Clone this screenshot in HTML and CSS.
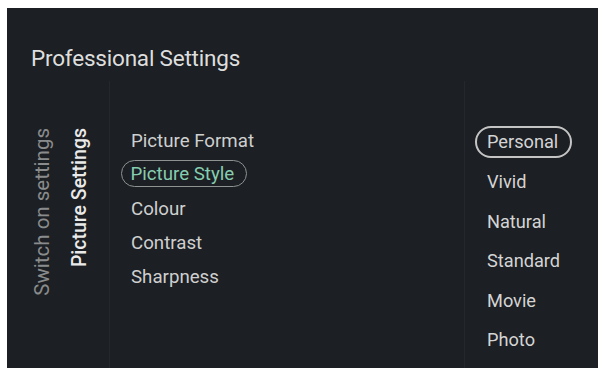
FILE: index.html
```html
<!DOCTYPE html>
<html lang="en">

<head>
    <meta charset="UTF-8">
    <meta name="viewport" content="width=device-width, initial-scale=1.0">
    <title>Professional Settings</title>
    <link rel="stylesheet" href="styles.css">
</head>

<body>
    <div class="panel">
        <h1 class="title">Professional Settings</h1>

        <div class="menu">
            <!-- Breadcrumb, rotated -->
            <div class="crumbs">
                <span class="crumb">Switch on settings</span>
                <span class="crumb current">Picture Settings</span>
            </div>

            <!-- Picture settings list -->
            <ul class="list middle">
                <li>Picture Format</li>
                <li class="focus">Picture Style</li>
                <li>Colour</li>
                <li>Contrast</li>
                <li>Sharpness</li>
            </ul>

            <!-- Picture style options -->
            <ul class="list options">
                <li class="selected">Personal</li>
                <li>Vivid</li>
                <li>Natural</li>
                <li>Standard</li>
                <li>Movie</li>
                <li>Photo</li>
            </ul>
        </div>
    </div>
</body>

</html>
```

FILE: styles.css
```css
body {
    margin: 0;
    background-color: #fff;
    font-family: Roboto, "Liberation Sans", sans-serif;
}

.panel {
    margin: 8px 0 0 7px;
    height: 360px;
    background-color: #1c1f23;
    overflow: hidden;
}

.title {
    margin: 0;
    padding: 37px 0 0 24px;
    height: 73px;
    box-sizing: border-box;
    font-size: 22.5px;
    font-weight: normal;
    color: #dedede;
    letter-spacing: -0.2px;
}

.menu {
    display: flex;
    height: 287px;
}

.crumbs {
    width: 103px;
    display: flex;
    align-items: flex-start;
    padding: 47px 0 0 24px;
    box-sizing: border-box;
    gap: 16px;
    border-right: 1px solid #24282c;
}

.crumb {
    writing-mode: vertical-rl;
    transform: rotate(180deg);
    font-size: 20.5px;
    color: #8a8b8c;
    line-height: 22px;
}

.crumb.current {
    font-size: 19.5px;
    color: #eaeaea;
    font-weight: 500;
}

.list {
    list-style-type: none;
    margin: 0;
    padding: 0;
}

.list li {
    line-height: 24px;
}

.middle {
    width: 355px;
    padding: 48px 0 0 21px;
    box-sizing: border-box;
    border-right: 1px solid #24282c;
    font-size: 18.7px;
    color: #cfcfcf;
}

.middle li {
    margin-bottom: 10px;
}

.middle .focus {
    width: fit-content;
    margin: -3px 0 10px -10px;
    padding: 0.5px 12px 0.5px 8.5px;
    border: 1.5px solid #8e9392;
    border-radius: 16px;
    color: #86cdb0;
}

.options {
    padding: 45px 0 0 10px;
    font-size: 18.2px;
    color: #d4d4d4;
}

.options li {
    margin-bottom: 15.5px;
    padding-left: 12px;
}

.options .selected {
    display: inline-block;
    padding: 2px 12px 2px 10px;
    border: 2px solid #c4c4c4;
    border-radius: 18px;
    margin-bottom: 12px;
}
```
